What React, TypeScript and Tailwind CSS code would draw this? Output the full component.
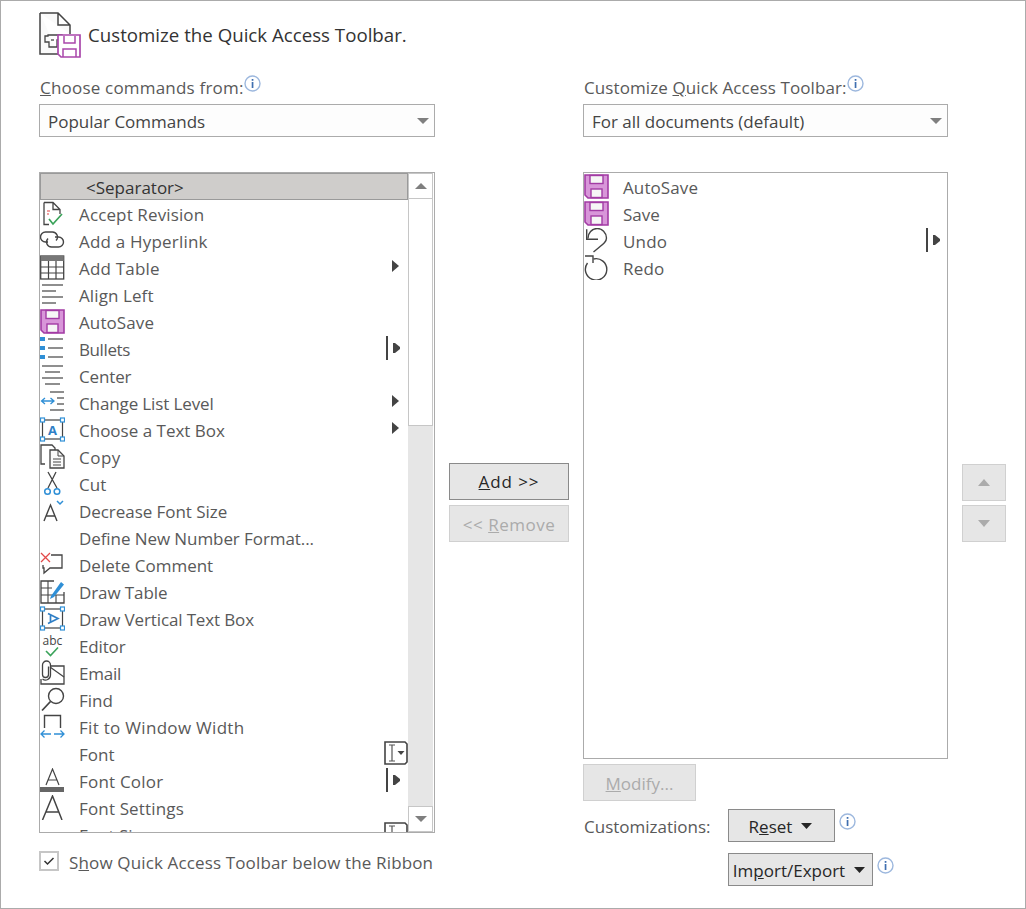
import React from "react";

const FONT = "font-['Open_Sans','Noto_Sans',sans-serif]";
const D = "#444444";
const BLUE = "#2f8fd6";

function Svg({ children, w = 25, h = 25 }: { children: React.ReactNode; w?: number; h?: number }) {
  return (
    <svg width={w} height={h} viewBox={`0 0 ${w} ${h}`} fill="none" className="shrink-0 block">
      {children}
    </svg>
  );
}

function Disk() {
  return (
    <Svg>
      <path d="M1 1H24V24H4L1 21Z" fill="#d896d9" stroke="#a23ba4" strokeWidth="1.6" />
      <rect x="6" y="1.500" width="13" height="8" fill="#f6f6f6" stroke="#a23ba4" strokeWidth="1.400" />
      <rect x="7" y="15" width="11" height="8.500" fill="#f6f6f6" stroke="#a23ba4" strokeWidth="1.400" />
    </Svg>
  );
}
const lines = (arr: [number, number, number][]) =>
  arr.map(([x1, x2, y], i) => <path key={i} d={`M${x1} ${y}H${x2}`} stroke={D} strokeWidth="1.200" />);

const icons: Record<string, React.ReactNode> = {
  accept: (
    <Svg>
      <path d="M4 1.500H13L20 8.500V13M20 8.500H13V1.500M4 1.500V23.500H9" stroke={D} strokeWidth="1.300" />
      <path d="M7 10h3M7 13h2" stroke="#e04343" strokeWidth="1.200" />
      <path d="M9 18l4 5 9-10" stroke="#3aa35a" strokeWidth="1.700" />
    </Svg>
  ),
  link: (
    <Svg>
      <path d="M8 14H5.500a5 5 0 0 1 0-10h7a5 5 0 0 1 3.500 8.500" stroke={D} strokeWidth="1.400" />
      <path d="M15 9h3.500a5 5 0 0 1 0 10h-7a5 5 0 0 1-3.500-8.500" stroke={D} strokeWidth="1.400" />
    </Svg>
  ),
  table: (
    <Svg>
      <rect x="0.700" y="1" width="23" height="23" stroke={D} strokeWidth="1.300" />
      <rect x="0.700" y="1" width="23" height="5" fill="#777" />
      <path d="M8.500 6V24M16 6V24M1 12H24M1 18H24" stroke={D} strokeWidth="1.200" />
    </Svg>
  ),
  left: <Svg>{lines([[2, 23, 3], [2, 16, 9], [2, 23, 15], [2, 16, 21]])}</Svg>,
  disk: <Disk />,
  bullets: (
    <Svg>
      {lines([[8, 23, 3], [8, 23, 12], [8, 23, 21]])}
      <rect x="0" y="1" width="5" height="4" fill={BLUE} />
      <rect x="0" y="10" width="5" height="4" fill={BLUE} />
      <rect x="0" y="19" width="5" height="4" fill={BLUE} />
    </Svg>
  ),
  center: <Svg>{lines([[2, 23, 3], [5, 20, 9], [2, 23, 15], [5, 20, 21]])}</Svg>,
  level: (
    <Svg>
      {lines([[10, 24, 2], [17, 24, 8], [17, 24, 14], [10, 24, 20]])}
      <path d="M1.500 11H14M5 8l-3.500 3L5 14M10.500 8l3.500 3-3.500 3" stroke={BLUE} strokeWidth="1.300" />
    </Svg>
  ),
  textbox: (
    <Svg>
      <rect x="2.500" y="3" width="20" height="19" stroke={D} strokeWidth="1.200" />
      {[[0, 1], [20, 1], [0, 20], [20, 20]].map(([x, y], i) => (
        <rect key={i} x={x + 0.5} y={y} width="4" height="4" fill="white" stroke={BLUE} strokeWidth="1.200" />
      ))}
      <text x="12.500" y="18" textAnchor="middle" fontSize="13" fontWeight="700" fill="#2f7fc6" fontFamily="Open Sans">A</text>
    </Svg>
  ),
  copy: (
    <Svg>
      <path d="M5 20H1V1H12L15 4V7" stroke={D} strokeWidth="1.300" />
      <path d="M10 6H18L24 12V24H10Z" fill="#fafafa" stroke={D} strokeWidth="1.300" />
      <path d="M18 6V12H24M13 15H21M13 18H21M13 21H21" stroke={D} strokeWidth="1" />
    </Svg>
  ),
  cut: (
    <Svg>
      <path d="M8 1L17 17M16 1L8 17" stroke={D} strokeWidth="1.300" />
      <circle cx="7.500" cy="20.500" r="2.800" stroke={BLUE} strokeWidth="1.500" />
      <circle cx="17" cy="20.500" r="2.800" stroke={BLUE} strokeWidth="1.500" />
    </Svg>
  ),
  decrease: (
    <Svg>
      <path d="M4 23L10.500 7L17 23M6.500 18H14.500" stroke={D} strokeWidth="1.400" />
      <path d="M17 3l3 3 3-3" stroke={BLUE} strokeWidth="1.500" />
    </Svg>
  ),
  blank: <Svg><g /></Svg>,
  delcomment: (
    <Svg>
      <path d="M11 3H22V16H10L4 21V16H3V13" stroke={D} strokeWidth="1.300" />
      <path d="M1 1L10 10M10 1L1 10" stroke="#e24a4a" strokeWidth="1.300" />
    </Svg>
  ),
  drawtable: (
    <Svg>
      <path d="M14 2H1V24H24V13" stroke={D} strokeWidth="1.300" />
      <path d="M1 9H12M8 2V24M1 16H24M16 16V24" stroke={D} strokeWidth="1.100" />
      <path d="M11 17L21 3L24 5.500L14 18L10 20Z" fill={BLUE} />
    </Svg>
  ),
  vtext: (
    <Svg>
      <rect x="2.500" y="3" width="20" height="19" stroke={D} strokeWidth="1.200" />
      {[[0, 1], [20, 1], [0, 20], [20, 20]].map(([x, y], i) => (
        <rect key={i} x={x + 0.5} y={y} width="4" height="4" fill="white" stroke={BLUE} strokeWidth="1.200" />
      ))}
      <path d="M8 7.500L18 12.500L8 17.500M10.500 8.800V16.200" stroke="#2f7fc6" strokeWidth="1.700" />
    </Svg>
  ),
  editor: (
    <Svg>
      <text x="12.500" y="11.500" textAnchor="middle" fontSize="12" fill={D} fontFamily="Open Sans">abc</text>
      <path d="M6 18l4.500 4.500L18 14.500" stroke="#3aa35a" strokeWidth="1.600" />
    </Svg>
  ),
  email: (
    <Svg>
      <path d="M10 6H24V24H1V19" stroke={D} strokeWidth="1.300" />
      <path d="M10 7L24 17" stroke={D} strokeWidth="1.200" />
      <path d="M8.500 6.500V14.500a3 3 0 0 1-6 0V5a4 4 0 0 1 8 0V15a5 5 0 0 1-8 4" stroke={D} strokeWidth="1.300" />
    </Svg>
  ),
  find: (
    <Svg>
      <circle cx="16" cy="9" r="7.500" stroke={D} strokeWidth="1.400" />
      <path d="M10.500 14.500L2 23.500" stroke={D} strokeWidth="1.800" />
    </Svg>
  ),
  fit: (
    <Svg>
      <path d="M4.500 14V1.500H20.500V14" stroke={D} strokeWidth="1.400" />
      <path d="M1 20H11M14 20H24M4.500 16.500L1 20l3.500 3.500M20.500 16.500L24 20l-3.500 3.500" stroke={BLUE} strokeWidth="1.300" />
    </Svg>
  ),
  fontcolor: (
    <Svg>
      <path d="M6 17L12.500 1L19 17M8.200 12H16.800" stroke={D} strokeWidth="1.200" />
      <rect x="0" y="19" width="24" height="5" fill="#666" />
    </Svg>
  ),
  fontset: (
    <Svg>
      <path d="M2.500 25L12.500 1L22 25M6 17H19" stroke={D} strokeWidth="1.500" />
    </Svg>
  ),
  undo: (
    <Svg>
      <path d="M2.700 1.300V11.300H14" stroke={D} strokeWidth="1.400" />
      <path d="M4 10.500A9.200 9.700 0 0 1 22.500 10C22.500 14 19 16 9.500 24" stroke={D} strokeWidth="1.400" />
    </Svg>
  ),
  redo: (
    <Svg>
      <path d="M1 1H9V8" stroke={D} strokeWidth="1.400" />
      <path d="M9.500 4A10.700 10.700 0 1 1 3.500 8" stroke={D} strokeWidth="1.400" />
    </Svg>
  ),
};

function RightArrow() {
  return (
    <svg width="7" height="12" viewBox="0 0 7 12" className="block shrink-0">
      <path d="M0 0L7 6L0 12Z" fill="#444" />
    </svg>
  );
}

function Split() {
  return (
    <div className="flex items-center h-[24px]">
      <div className="w-[2px] h-[24px] bg-[#444444]" />
      <div className="ml-[5px] mr-[1px]">
        <svg width="7" height="10" viewBox="0 0 7 10" className="block">
          <path d="M0 0H2L7 4V6L2 10H0Z" fill="#444" />
        </svg>
      </div>
    </div>
  );
}

function FontBox() {
  return (
    <svg width="24" height="24" viewBox="0 0 24 24" className="block shrink-0">
      <path d="M1 1H21L23 3V21L21 23H1Z" fill="white" stroke="#444" strokeWidth="1.600" />
      <path d="M5 4H11M5 20H11M8 4V20" stroke="#555" strokeWidth="1.200" />
      <path d="M13.500 10H20.500L17 14Z" fill="#444" />
    </svg>
  );
}

type Row = { icon: string; label: string; right?: "arrow" | "split" | "font"; t?: string };

const leftRows: Row[] = [
  { icon: "accept", label: "Accept Revision", t: "tracking-[0.13px]" },
  { icon: "link", label: "Add a Hyperlink", t: "tracking-[0.2px]" },
  { icon: "table", label: "Add Table", right: "arrow", t: "tracking-[0.2px]" },
  { icon: "left", label: "Align Left", t: "tracking-[0.1px]" },
  { icon: "disk", label: "AutoSave", t: "tracking-[0.1px]" },
  { icon: "bullets", label: "Bullets", right: "split", t: "tracking-[-0.4px]" },
  { icon: "center", label: "Center", t: "tracking-[-0.15px]" },
  { icon: "level", label: "Change List Level", right: "arrow", t: "tracking-[-0.12px]" },
  { icon: "textbox", label: "Choose a Text Box", right: "arrow" },
  { icon: "copy", label: "Copy", t: "tracking-[0.5px]" },
  { icon: "cut", label: "Cut" },
  { icon: "decrease", label: "Decrease Font Size", t: "tracking-[-0.05px]" },
  { icon: "blank", label: "Define New Number Format...", t: "tracking-[-0.08px]" },
  { icon: "delcomment", label: "Delete Comment" },
  { icon: "drawtable", label: "Draw Table", t: "tracking-[-0.1px]" },
  { icon: "vtext", label: "Draw Vertical Text Box", t: "tracking-[-0.14px]" },
  { icon: "editor", label: "Editor", t: "tracking-[-0.15px]" },
  { icon: "email", label: "Email", t: "tracking-[-0.2px]" },
  { icon: "find", label: "Find" },
  { icon: "fit", label: "Fit to Window Width", t: "tracking-[0.3px]" },
  { icon: "blank", label: "Font", right: "font" },
  { icon: "fontcolor", label: "Font Color", right: "split", t: "tracking-[0.2px]" },
  { icon: "fontset", label: "Font Settings", t: "tracking-[0.15px]" },
  { icon: "blank", label: "Font Size", right: "font" },
];

const rightRows: Row[] = [
  { icon: "disk", label: "AutoSave", t: "tracking-[0.1px]" },
  { icon: "disk", label: "Save" },
  { icon: "undo", label: "Undo", right: "split", t: "tracking-[0.2px]" },
  { icon: "redo", label: "Redo", t: "tracking-[0.2px]" },
];

function ListRow({ row, rightClass }: { row: Row; rightClass: string }) {
  return (
    <div className="flex items-center h-[27px] shrink-0 text-[#595959]">
      <div className="w-[25px] h-[25px] shrink-0">{icons[row.icon]}</div>
      <span className={`ml-[14px] whitespace-nowrap leading-[27px] pt-[2px] ${row.t ?? ""}`}>{row.label}</span>
      {row.right && (
        <div className={`ml-auto flex items-center justify-end h-[24px] ${row.right === "arrow" ? "mb-[4px]" : "mb-[2px]"} ${rightClass}`}>
          {row.right === "arrow" && <div className="mr-[2px]"><RightArrow /></div>}
          {row.right === "split" && <Split />}
          {row.right === "font" && <FontBox />}
        </div>
      )}
    </div>
  );
}

function Info() {
  return (
    <svg width="17" height="17" viewBox="0 0 17 17" className="block shrink-0">
      <circle cx="8.500" cy="8.500" r="7.500" fill="white" stroke="#9db8de" strokeWidth="1.400" />
      <rect x="7.700" y="7" width="1.700" height="6" fill="#3f6fb0" />
      <rect x="7.700" y="4" width="1.700" height="1.800" fill="#3f6fb0" />
    </svg>
  );
}

function Select({ label }: { label: string }) {
  return (
    <div className="flex items-center justify-between h-[33px] border border-[#ababab] bg-[#fdfdfd] pl-[8px] pr-[5px] text-[#444444]">
      <span className="pt-[2px]">{label}</span>
      <svg width="12" height="6" viewBox="0 0 12 6" className="block">
        <path d="M0 0H12L6 6Z" fill="#7f7f7f" />
      </svg>
    </div>
  );
}

function Caret() {
  return (
    <svg width="11" height="6" viewBox="0 0 11 6" className="block shrink-0">
      <path d="M0 0H11L5.500 6Z" fill="#262626" />
    </svg>
  );
}

function ScrollBtn({ up }: { up?: boolean }) {
  return (
    <div className="h-[26px] shrink-0 bg-white border border-[#c6c6c6] flex items-center justify-center">
      <svg width="12" height="6" viewBox="0 0 12 6" className="block">
        <path d={up ? "M6 0L12 6H0Z" : "M0 0H12L6 6Z"} fill="#7f7f7f" />
      </svg>
    </div>
  );
}

function MoveBtn({ up }: { up?: boolean }) {
  return (
    <div className="w-[44px] h-[37px] bg-[#e6e6e6] border border-[#d0d0d0] flex items-center justify-center">
      <svg width="12" height="7" viewBox="0 0 12 7" className="block">
        <path d={up ? "M6 0L12 7H0Z" : "M0 0H12L6 7Z"} fill="#ababab" />
      </svg>
    </div>
  );
}

export default function App() {
  return (
    <div className={`${FONT} w-[1026px] h-[909px] bg-white border border-[#ababab] text-[17px] leading-[24px] text-[#444444] overflow-hidden`}>
      <div className="flex items-start h-[74px] pl-[38px] pt-[11px]">
        <svg width="42" height="46" viewBox="0 0 42 46" className="block shrink-0">
          <path d="M1 1H19L31 13V22M19 1V13H31M19 42H1V1" fill="#fafafa" stroke="#444" strokeWidth="1.500" />
          <path d="M9 23H23V28H18V35H10V30H6V24H9Z" fill="none" stroke="#444" strokeWidth="1.300" />
          <path d="M12 28h3" stroke="#444" strokeWidth="1.300" />
          <path d="M19 23H41V45H22L19 42Z" fill="#fff" stroke="#a947ab" strokeWidth="1.700" />
          <path d="M25 24V31H36V24M24 45V37H37V45" stroke="#a947ab" strokeWidth="1.500" fill="none" />
        </svg>
        <span className="ml-[7px] mt-[11px] text-[18.7px] text-[#333333] whitespace-nowrap">Customize the Quick Access Toolbar.</span>
      </div>

      <div className="flex items-start pl-[38px]">
        <div className="w-[396px] shrink-0">
          <div className="h-[29px] flex items-start pl-[1px] text-[#595959]">
            <span className="mt-[1px] tracking-[0.2px]"><span className="underline">C</span>hoose commands from:</span>
            <Info />
          </div>
          <Select label="Popular Commands" />
          <div className="mt-[35px] h-[661px] border border-[#ababab] flex overflow-hidden">
            <div className="w-[368px] shrink-0 flex flex-col overflow-hidden">
              <div className="h-[27px] shrink-0 bg-[#cfcdcb] border border-[#9a9a9a] pl-[45px] text-[#333333] leading-[27px]">&lt;Separator&gt;</div>
              {leftRows.map((r) => (
                <ListRow key={r.label} row={r} rightClass={r.right === "font" ? "" : "mr-[7px]"} />
              ))}
            </div>
            <div className="w-[25px] shrink-0 bg-[#e6e6e6] flex flex-col">
              <ScrollBtn up />
              <div className="h-[227px] shrink-0 bg-white border border-[#c6c6c6] border-t-0" />
              <div className="flex-1" />
              <ScrollBtn />
            </div>
          </div>
          <div className="mt-[18px] flex items-center h-[20px]">
            <div className="w-[20px] h-[20px] border-2 border-[#c6c6c6] flex items-center justify-center">
              <svg width="12" height="10" viewBox="0 0 12 10" className="block">
                <path d="M1.500 5L4.500 8L10.500 2" stroke="#333" strokeWidth="1.500" fill="none" />
              </svg>
            </div>
            <span className="ml-[10px] whitespace-nowrap text-[#595959] pt-[4px] tracking-[0.14px]">S<span className="underline">h</span>ow Quick Access Toolbar below the Ribbon</span>
          </div>
        </div>

        <div className="ml-[14px] w-[120px] shrink-0 pt-[388px] flex flex-col gap-[5px]">
          <div className="h-[37px] bg-[#e6e6e6] border border-[#8a8a8a] flex items-center justify-center text-[#262626]">
            <span className="tracking-[0.9px]"><span className="underline">A</span>dd &gt;&gt;</span>
          </div>
          <div className="h-[37px] bg-[#e6e6e6] border border-[#d0d0d0] flex items-center justify-center text-[#ababab]">
            <span className="pt-[2px] tracking-[0.5px]">&lt;&lt; <span className="underline">R</span>emove</span>
          </div>
        </div>

        <div className="ml-[14px] w-[365px] shrink-0">
          <div className="h-[29px] flex items-start pl-[1px] text-[#595959]">
            <span className="mt-[1px] tracking-[0.1px]">Customize <span className="underline">Q</span>uick Access Toolbar:</span>
            <Info />
          </div>
          <Select label="For all documents (default)" />
          <div className="mt-[35px] h-[587px] border border-[#ababab] flex flex-col">
            {rightRows.map((r) => (
              <ListRow key={r.label} row={r} rightClass="mr-[6px]" />
            ))}
          </div>
          <div className="mt-[5px] w-[113px] h-[37px] bg-[#e6e6e6] border border-[#d0d0d0] flex items-center justify-center text-[#ababab]">
            <span className="pt-[2px]"><span className="underline">M</span>odify...</span>
          </div>
          <div className="mt-[8px] flex items-start">
            <span className="w-[145px] pl-[1px] h-[33px] leading-[36px] text-[#595959]">Customizations:</span>
            <div className="w-[107px] h-[33px] bg-[#e6e6e6] border border-[#8a8a8a] flex items-center justify-center gap-[9px] pr-[2px] text-[#262626]">
              <span className="pt-[2px]">R<span className="underline">e</span>set</span>
              <Caret />
            </div>
            <div className="ml-[4px] mt-[4px]"><Info /></div>
          </div>
          <div className="mt-[11px] flex items-start pl-[145px]">
            <div className="w-[145px] h-[33px] bg-[#e6e6e6] border border-[#8a8a8a] flex items-center justify-center gap-[9px] pr-[3px] text-[#262626]">
              <span className="pt-[2px]">Im<span className="underline">p</span>ort/Export</span>
              <Caret />
            </div>
            <div className="ml-[4px] mt-[4px]"><Info /></div>
          </div>
        </div>

        <div className="ml-[14px] pt-[389px] flex flex-col gap-[4px] shrink-0">
          <MoveBtn up />
          <MoveBtn />
        </div>
      </div>
    </div>
  );
}
